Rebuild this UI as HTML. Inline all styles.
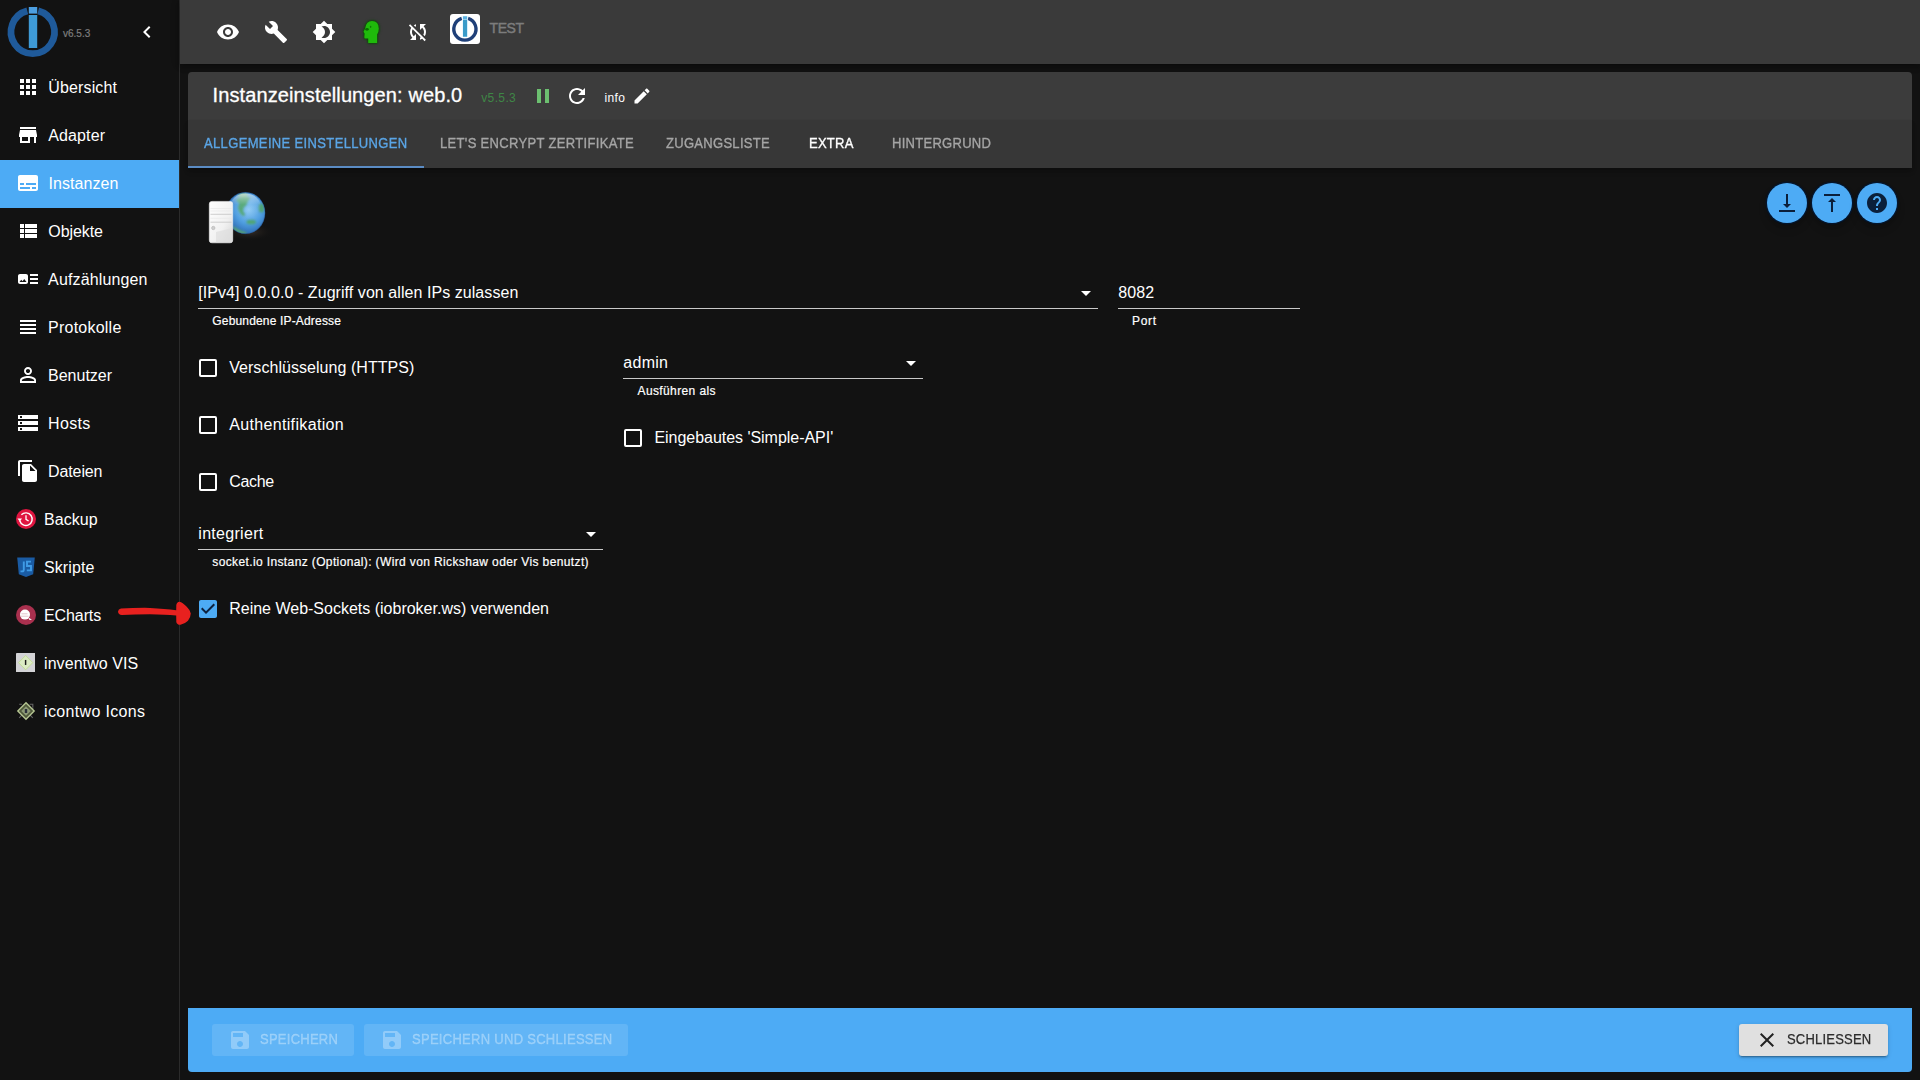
<!DOCTYPE html>
<html><head><meta charset="utf-8">
<style>
*{box-sizing:border-box;margin:0;padding:0}
html,body{width:1920px;height:1080px;overflow:hidden;background:#121212;font-family:"Liberation Sans",sans-serif;color:#fff}
.abs{position:absolute}
svg{display:block}
#side{position:absolute;left:0;top:0;width:180px;height:1080px;background:#121212;border-right:1px solid #2b2b2b}
.it{position:absolute;left:0;width:179px;height:48px;}
.it svg.mi{position:absolute;left:16px;top:11px;width:24px;height:24px;fill:#fff}
.it .ci{position:absolute;left:16px;top:13px;width:20px;height:20px}
.it span{position:absolute;top:0;line-height:47px;font-size:16px;white-space:nowrap;color:#fff}
.it .t1{left:48px}
.it .t2{left:44px}
#top{position:absolute;left:180px;top:0;width:1740px;height:64px;background:#3a3a3a;box-shadow:0 2px 4px -1px rgba(0,0,0,.2),0 4px 5px 0 rgba(0,0,0,.14),0 1px 10px 0 rgba(0,0,0,.12)}
#top svg.ti{position:absolute;width:24px;height:24px;fill:#fff;top:20px}
#title{position:absolute;left:188px;top:72px;width:1724px;height:48px;background:#3c3c3c;border-radius:4px 4px 0 0}
#tabs{position:absolute;left:188px;top:120px;width:1724px;height:48px;background:#373737;box-shadow:0 2px 4px -1px rgba(0,0,0,.2),0 4px 5px 0 rgba(0,0,0,.14)}
.tab{position:absolute;top:0;transform:scaleX(.93);transform-origin:0 0;line-height:47px;font-size:14px;white-space:nowrap;color:#a5a5a5;-webkit-text-stroke:.35px currentColor}
.txt{position:absolute;white-space:nowrap;color:#fff}
.f16{font-size:16px;line-height:20px}
.f12{font-size:12px;line-height:14px;-webkit-text-stroke:.2px #fff}
.ul{position:absolute;height:1px;background:#c9c9c9}
.cb{position:absolute;width:18px;height:18px;border:2px solid #fff;border-radius:2px}
.arr{position:absolute;width:0;height:0;border-left:5px solid transparent;border-right:5px solid transparent;border-top:5px solid #fff}
.fab{position:absolute;width:40px;height:40px;border-radius:50%;background:#4dabf5;top:183px;box-shadow:0 0 0 1.500px rgba(4,22,48,.85),0 3px 5px -1px rgba(0,0,0,.2),0 6px 10px 0 rgba(0,0,0,.14)}
.fab svg{position:absolute;left:8px;top:8px;width:24px;height:24px;fill:#0b1f3a}
#bot{position:absolute;left:188px;top:1008px;width:1724px;height:64px;background:#4dabf5;border-radius:0 0 4px 4px}
.btn{position:absolute;top:16px;height:32px;border-radius:3px;font-size:14px;white-space:nowrap}
.btn.dis{background:rgba(255,255,255,.12);color:rgba(255,255,255,.3)}
.btn span{position:absolute;top:0;line-height:31px;transform:scaleX(.93);transform-origin:0 0}
.btn.dis span{-webkit-text-stroke:.35px currentColor}
/*LS*/
#n0{letter-spacing:0.140px;margin-left:0.3px}
#n1{letter-spacing:0.109px;margin-left:0.3px}
#n2{letter-spacing:0.089px;margin-left:0.4px}
#n3{letter-spacing:-0.073px;margin-left:0.3px}
#n4{letter-spacing:0.140px;margin-left:0.1px}
#n5{letter-spacing:0.227px;margin-left:0.1px}
#n6{letter-spacing:-0.021px;margin-left:0.1px}
#n7{letter-spacing:0.323px;margin-left:0.1px}
#n8{letter-spacing:-0.126px;margin-left:0.1px}
#n9{letter-spacing:0.065px;margin-left:0.0px}
#n10{letter-spacing:0.101px;margin-left:0.0px}
#n11{letter-spacing:-0.099px;margin-left:0.0px}
#n12{letter-spacing:0.074px;margin-left:0.0px}
#n13{letter-spacing:0.347px;margin-left:0.0px}
#s1{letter-spacing:0.061px;margin-left:0.3px}
#h1{letter-spacing:0.167px;margin-left:0.3px}
#c1{letter-spacing:0.047px;margin-left:0.2px}
#s3{letter-spacing:0.280px;margin-left:0.3px}
#h3{letter-spacing:0.384px;margin-left:0.5px}
#c3{letter-spacing:-0.032px;margin-left:0.4px}
#s2{letter-spacing:0.135px;margin-left:0.2px}
#h2{letter-spacing:0.661px;margin-left:0.0px}
#c2{letter-spacing:0.340px;margin-left:0.2px}
#c4{letter-spacing:-0.312px;margin-left:0.2px}
#s4{letter-spacing:0.294px;margin-left:0.3px}
#h4{letter-spacing:0.375px;margin-left:0.3px}
#c5{letter-spacing:-0.001px;margin-left:0.2px}
#ttl{letter-spacing:0.110px;margin-left:0.5px}
#ver{letter-spacing:0.379px;margin-left:-0.8px}
#info{letter-spacing:0.414px;margin-left:0.4px}
#tb1{letter-spacing:0.367px;margin-left:-0.2px}
#tb2{letter-spacing:0.344px;margin-left:0.0px}
#tb3{letter-spacing:0.306px;margin-left:0.2px}
#tb4{letter-spacing:0.264px;margin-left:0.2px}
#tb5{letter-spacing:0.289px;margin-left:0.3px}
#b1{letter-spacing:0.259px;margin-left:-0.4px}
#b2{letter-spacing:0.294px;margin-left:0.0px}
#b3{letter-spacing:0.204px;margin-left:-0.1px}
#v6{letter-spacing:-0.020px;margin-left:0.1px}
#test{letter-spacing:-0.460px;margin-left:0.0px}
/*ENDLS*/
</style></head><body>

<div id="side">
 <!-- logo -->
 <svg class="abs" style="left:0;top:0" width="64" height="64" viewBox="0 0 64 64">
  <path d="M27.3 10.9 A21.75 21.75 0 1 0 38.2 10.9" fill="none" stroke="#1f5a9a" stroke-width="6.8"/>
  <rect x="28.8" y="7" width="8.4" height="6.6" fill="#4c9fe2"/>
  <rect x="28.8" y="15" width="8.4" height="33" fill="#3e9ad6"/>
 </svg>
 <div class="txt" id="v6" style="left:63px;top:27.500px;font-size:10px;line-height:12px;color:#7e7e7e;-webkit-text-stroke:.2px #7e7e7e">v6.5.3</div>
 <svg class="abs" style="left:135px;top:20px;fill:#fff" width="24" height="24" viewBox="0 0 24 24"><path d="M15.41 7.41L14 6l-6 6 6 6 1.41-1.41L10.83 12z"/></svg>

 <div class="it" style="top:64px"><svg class="mi" viewBox="0 0 24 24"><path d="M4 8h4V4H4v4zm6 12h4v-4h-4v4zm-6 0h4v-4H4v4zm0-6h4v-4H4v4zm6 0h4v-4h-4v4zm6-10v4h4V4h-4zm-6 4h4V4h-4v4zm6 6h4v-4h-4v4zm0 6h4v-4h-4v4z"/></svg><span class="t1" id="n0">Übersicht</span></div>
 <div class="it" style="top:112px"><svg class="mi" viewBox="0 0 24 24"><path d="M20 4H4v2h16V4zm1 10v-2l-1-5H4l-1 5v2h1v6h10v-6h4v6h2v-6h1zm-9 4H6v-4h6v4z"/></svg><span class="t1" id="n1">Adapter</span></div>
 <div class="it" style="top:160px;background:#4dabf5"><svg class="mi" viewBox="0 0 24 24"><path d="M20 4H4c-1.1 0-2 .9-2 2v12c0 1.1.9 2 2 2h16c1.1 0 2-.9 2-2V6c0-1.1-.9-2-2-2zM4 12h4v2H4v-2zm10 6H4v-2h10v2zm6 0h-4v-2h4v2zm0-4H10v-2h10v2z"/></svg><span class="t1" id="n2">Instanzen</span></div>
 <div class="it" style="top:208px"><svg class="mi" viewBox="0 0 24 24"><path d="M4 14h4v-4H4v4zm0 5h4v-4H4v4zM4 9h4V5H4v4zm5 5h12v-4H9v4zm0 5h12v-4H9v4zM9 5v4h12V5H9z"/></svg><span class="t1" id="n3">Objekte</span></div>
 <div class="it" style="top:256px"><svg class="mi" viewBox="0 0 24 24"><path d="M22 13h-8v-2h8v2zm0-6h-8v2h8V7zm-8 10h8v-2h-8v2zm-2-8v6c0 1.1-.9 2-2 2H4c-1.1 0-2-.9-2-2V9c0-1.1.9-2 2-2h6c1.1 0 2 .9 2 2zm-1.500 6l-2.250-3-1.750 2.260-1.250-1.510L3.500 15h7z"/></svg><span class="t1" id="n4">Aufzählungen</span></div>
 <div class="it" style="top:304px"><svg class="mi" viewBox="0 0 24 24"><path d="M4 15h16v-2H4v2zm0 4h16v-2H4v2zm0-8h16V9H4v2zm0-6v2h16V5H4z"/></svg><span class="t1" id="n5">Protokolle</span></div>
 <div class="it" style="top:352px"><svg class="mi" viewBox="0 0 24 24"><path d="M12 5.900c1.160 0 2.100.940 2.100 2.100s-.940 2.100-2.100 2.100S9.900 9.160 9.900 8s.940-2.100 2.100-2.100m0 9c2.970 0 6.100 1.460 6.100 2.100v1.100H5.900V17c0-.640 3.130-2.100 6.100-2.100M12 4C9.790 4 8 5.790 8 8s1.790 4 4 4 4-1.790 4-4-1.790-4-4-4zm0 9c-2.670 0-8 1.340-8 4v3h16v-3c0-2.660-5.330-4-8-4z"/></svg><span class="t1" id="n6">Benutzer</span></div>
 <div class="it" style="top:400px"><svg class="mi" viewBox="0 0 24 24"><path d="M2 20h20v-4H2v4zm2-3h2v2H4v-2zM2 4v4h20V4H2zm4 3H4V5h2v2zm-4 7h20v-4H2v4zm2-3h2v2H4v-2z"/></svg><span class="t1" id="n7">Hosts</span></div>
 <div class="it" style="top:448px"><svg class="mi" viewBox="0 0 24 24"><path d="M16 1H4c-1.100 0-2 .900-2 2v14h2V3h12V1zm-1 4l6 6v10c0 1.100-.900 2-2 2H7.990C6.890 23 6 22.100 6 21l.010-14c0-1.100.890-2 1.990-2h7zm-1 7h5.500L14 6.500V12z"/></svg><span class="t1" id="n8">Dateien</span></div>
 <div class="it" style="top:496px"><div class="ci" id="ic-backup"><svg viewBox="0 0 20 20" width="20" height="20"><circle cx="10" cy="10" r="10" fill="#df1540"/><path d="M3.800 11.800A6.300 6.300 0 1 0 5.400 5.700" stroke="#fff" fill="none" stroke-width="1.400"/><path d="M1.500 9.600h4.600l-2.300 3z" fill="#fff"/><path d="M10 6.300v4l2.600 1.700" stroke="#fff" fill="none" stroke-width="1.300"/></svg></div><span class="t2" id="n9">Backup</span></div>
 <div class="it" style="top:544px"><div class="ci" id="ic-js"><svg viewBox="0 0 20 20" width="20" height="20"><path d="M1.200 .6h17.600l-1.600 16.600L10 20l-7.200-2.800z" fill="#1a5ba3"/><path d="M7.800 4.600v8.200q0 1.600-1.700 1.600h-1.600M15 4.600h-4v4.400h4v4.400h-4.200" fill="none" stroke="#3f9be6" stroke-width="1.900"/></svg></div><span class="t2" id="n10">Skripte</span></div>
 <div class="it" style="top:592px"><div class="ci" id="ic-echarts"><svg viewBox="0 0 20 20" width="20" height="20"><circle cx="10" cy="10" r="10" fill="#a9304e"/><circle cx="9" cy="9.600" r="5" fill="#fff"/><path d="M5 11.200h7.500M5.500 8.800h6" stroke="#d9b6bf" stroke-width=".8"/><path d="M12.500 12.500l3.500 2.300-2.600.3z" fill="#fff"/></svg></div><span class="t2" id="n11">ECharts</span></div>
 <div class="it" style="top:640px"><div class="ci" id="ic-inv"><svg viewBox="0 0 20 20" width="19.300" height="19.300"><rect width="20" height="20" rx=".8" fill="#d3d3d6"/><path d="M10 2.600l7.400 7.400-7.400 7.400L2.600 10z" fill="#dcebc4" stroke="#bfdc8e" stroke-width=".9"/><rect x="9.200" y="7.200" width="1.500" height="5.200" fill="#1c1c1c"/></svg></div><span class="t2" id="n12">inventwo VIS</span></div>
 <div class="it" style="top:688px"><div class="ci" id="ic-icon2"><svg viewBox="-1 -1 22 22" width="20" height="20" style="opacity:.9"><path d="M2.500 2.500h3M14 2.500h3.500v3M2.500 17.500l3-3M14.500 14.500l3 3M17.500 6v2" stroke="#6d6d6d" stroke-width="1.200" fill="none"/><path d="M10 1l9 9-9 9-9-9z" fill="#55603f" stroke="#c9dba2" stroke-width="1.500"/><path d="M10 4.800l5.200 5.200-5.200 5.200L4.800 10z" fill="#9aa981"/><rect x="8.700" y="7.800" width="2.600" height="4.400" fill="#2e3440"/></svg></div><span class="t2" id="n13">icontwo Icons</span></div>
</div>

<div id="top">
 <svg class="ti" style="left:36px" viewBox="0 0 24 24"><path d="M12 4.500C7 4.500 2.730 7.610 1 12c1.730 4.390 6 7.500 11 7.500s9.270-3.110 11-7.500c-1.730-4.390-6-7.500-11-7.500zM12 17c-2.760 0-5-2.240-5-5s2.240-5 5-5 5 2.240 5 5-2.240 5-5 5zm0-8c-1.660 0-3 1.340-3 3s1.340 3 3 3 3-1.340 3-3-1.340-3-3-3z"/></svg>
 <svg class="ti" style="left:84px" viewBox="0 0 24 24"><path d="M22.700 19l-9.100-9.100c.900-2.300.400-5-1.500-6.900-2-2-5-2.400-7.400-1.300L9 6 6 9 1.600 4.700C.400 7.100.900 10.100 2.900 12.100c1.900 1.900 4.600 2.400 6.900 1.500l9.100 9.100c.400.400 1 .400 1.400 0l2.300-2.300c.500-.400.500-1.100.100-1.400z"/></svg>
 <svg class="ti" style="left:132px" viewBox="0 0 24 24"><path d="M20 8.690V4h-4.690L12 .690 8.690 4H4v4.690L.690 12 4 15.310V20h4.690L12 23.310 15.310 20H20v-4.690L23.310 12 20 8.690zM12 18c-.890 0-1.740-.200-2.500-.550C11.560 16.500 13 14.420 13 12s-1.440-4.500-3.500-5.450C10.260 6.200 11.110 6 12 6c3.310 0 6 2.690 6 6s-2.690 6-6 6z"/></svg>
 <svg class="ti" style="left:226px" viewBox="0 0 24 24"><path d="M10 6.350V4.260c-.800.210-1.550.540-2.230.960l1.460 1.460c.250-.120.500-.240.770-.330zm-7.140-.940l2.360 2.360C4.450 8.990 4 10.440 4 12c0 2.210.910 4.200 2.360 5.640L4 20h6v-6l-2.240 2.240C6.680 15.150 6 13.660 6 12c0-1 .250-1.940.680-2.770l8.080 8.080c-.250.130-.500.250-.770.340v2.090c.800-.210 1.550-.540 2.230-.960l2.360 2.360 1.270-1.270L4.140 4.140 2.860 5.410zM20 4h-6v6l2.240-2.240C17.320 8.850 18 10.340 18 12c0 1-.250 1.940-.680 2.770l1.460 1.460C19.550 15.010 20 13.560 20 12c0-2.210-.910-4.200-2.360-5.640L20 4z"/></svg>
 <svg class="abs" style="left:172px;top:12px;filter:drop-shadow(0 0 1.300px #0a4a04) drop-shadow(0 0 .8px #0a4a04)" width="40" height="40" viewBox="352 12 40 40"><path fill="#1fba0b" d="M368.200 43V38.600H365.300Q364.200 38.500 364.300 37.200L364.600 33.400 363.500 31.800 365.200 28.200Q366.200 21 372 21 378.800 21 378.800 28.600 378.800 32.200 377.100 34.600V43Z"/><ellipse cx="367" cy="29.300" rx="1.800" ry="1.400" fill="#0a6a03"/><ellipse cx="370.600" cy="26.800" rx=".800" ry="1.100" fill="#0f7a06"/></svg>
 <svg class="abs" style="left:270px;top:14px" width="30" height="30" viewBox="450 14 30 30"><rect x="450" y="14" width="30" height="30" rx="3" fill="#fff"/><path d="M461.700 18.400A11.100 11.100 0 1 0 468.100 18.400" fill="none" stroke="#1f4079" stroke-width="3.350"/><rect x="462.600" y="16" width="4.900" height="21" fill="#d4f1ff"/><rect x="463" y="16.300" width="4.100" height="2.700" fill="#5cb2e2"/><rect x="463" y="19.600" width="4.100" height="17.100" fill="#3a9bc9"/></svg>
 <div class="txt" id="test" style="left:309.600px;top:20px;font-size:14px;line-height:16px;color:#7c7c7c;-webkit-text-stroke:.45px #7c7c7c">TEST</div>
</div>

<div id="title">
 <div class="txt" id="ttl" style="left:24px;top:11px;font-size:20px;line-height:24px;-webkit-text-stroke:.3px #fff">Instanzeinstellungen: web.0</div>
 <div class="txt" id="ver" style="left:294px;top:19px;font-size:12px;line-height:14px;color:#3f8646">v5.5.3</div>
 <svg class="abs" style="left:343px;top:12px;fill:#6cc070" width="24" height="24" viewBox="0 0 24 24"><path d="M6 19h4V5H6v14zm8-14v14h4V5h-4z"/></svg>
 <svg class="abs" style="left:377px;top:12px;fill:#fff" width="24" height="24" viewBox="0 0 24 24"><path d="M17.650 6.350C16.200 4.900 14.210 4 12 4c-4.420 0-7.990 3.580-7.990 8s3.570 8 7.990 8c3.730 0 6.840-2.550 7.730-6h-2.080c-.820 2.330-3.040 4-5.650 4-3.310 0-6-2.690-6-6s2.690-6 6-6c1.660 0 3.140.690 4.220 1.780L13 11h7V4l-2.350 2.350z"/></svg>
 <div class="txt" id="info" style="left:416px;top:19px;font-size:12px;line-height:14px">info</div>
 <svg class="abs" style="left:444px;top:14px;fill:#fff" width="20" height="20" viewBox="0 0 24 24"><path d="M3 17.250V21h3.750L17.810 9.940l-3.750-3.750L3 17.250zM20.710 7.040c.390-.390.390-1.020 0-1.410l-2.340-2.340c-.390-.390-1.020-.390-1.410 0l-1.830 1.830 3.750 3.750 1.830-1.830z"/></svg>
</div>
<div id="tabs">
 <div class="tab" id="tb1" style="left:16px;color:#5aa5e6">ALLGEMEINE EINSTELLUNGEN</div>
 <div class="tab" id="tb2" style="left:252px">LET'S ENCRYPT ZERTIFIKATE</div>
 <div class="tab" id="tb3" style="left:478px">ZUGANGSLISTE</div>
 <div class="tab" id="tb4" style="left:621px;color:#fff">EXTRA</div>
 <div class="tab" id="tb5" style="left:704px">HINTERGRUND</div>
 <div class="abs" style="left:0;top:46px;width:236px;height:2px;background:#5b8cc4"></div>
</div>
<div id="content">
 <svg id="webicon" class="abs" style="left:195px;top:180px" width="90" height="75" viewBox="195 180 90 75">
  <defs>
   <radialGradient id="gl" cx="0.58" cy="0.42" r="0.62"><stop offset="0" stop-color="#8fcaf5"/><stop offset=".55" stop-color="#4f9ee0"/><stop offset="1" stop-color="#2a65ae"/></radialGradient>
   <radialGradient id="sh" cx=".5" cy=".5" r=".5"><stop offset="0" stop-color="#3a302a" stop-opacity=".9"/><stop offset="1" stop-color="#121212" stop-opacity="0"/></radialGradient>
   <linearGradient id="sv" x1="0" y1="0" x2="1" y2="1"><stop offset="0" stop-color="#ffffff"/><stop offset=".6" stop-color="#f1f1f1"/><stop offset="1" stop-color="#d4d4d4"/></linearGradient>
   <clipPath id="gc"><ellipse cx="245.500" cy="213" rx="19.400" ry="20.600"/></clipPath>
   <linearGradient id="hl" x1="0" y1="0" x2="0" y2="1"><stop offset="0" stop-color="#fff" stop-opacity=".55"/><stop offset=".45" stop-color="#fff" stop-opacity=".05"/><stop offset="1" stop-color="#fff" stop-opacity="0"/></linearGradient>
   <filter id="bl"><feGaussianBlur stdDeviation=".9"/></filter>
  </defs>
  <ellipse cx="250" cy="232" rx="24" ry="9" fill="url(#sh)"/>
  <ellipse cx="245.500" cy="213" rx="19.600" ry="20.800" fill="url(#gl)"/>
  <g clip-path="url(#gc)" fill="#4fa566" opacity=".88" filter="url(#bl)">
   <path d="M236 200.100L239.400 197.400 245 196.200 251 197.500 248 200.800 246.400 205 243.600 207.800 243 211.200 245.200 214.500 243.600 216.300 240.800 214 238.700 210.600 238 207.100 239.400 203.600Z"/>
   <ellipse cx="251.200" cy="222" rx="4.800" ry="2.300"/>
   <path d="M233 226Q240 231 247 232.500L244 236 234 233Z" fill="#5aa870"/>
   <ellipse cx="261.500" cy="208" rx="2.800" ry="4.500"/>
   <ellipse cx="243" cy="195" rx="5" ry="2" fill="#6fb37c"/>
  </g>
  <ellipse cx="245.500" cy="206" rx="15" ry="12.500" fill="url(#hl)"/>
  <ellipse cx="245.500" cy="213" rx="19.400" ry="20.600" fill="none" stroke="#1d4f93" stroke-opacity=".3" stroke-width="1.200"/>
  <rect x="209.300" y="201.400" width="23.400" height="41.400" rx="2.600" fill="url(#sv)" stroke="#f4f4f4" stroke-width=".6"/>
  <path d="M210.500 214.300H231.500M210.500 222.200H231.500" stroke="#c9c9c9" stroke-width=".9"/>
  <path d="M210.500 208.500H231.500M210.500 211H231.500M210.500 218.300H231.500" stroke="#e6e6e6" stroke-width=".6"/>
  <circle cx="213.300" cy="228" r="1.700" fill="#cfcfcf" stroke="#b4b4b4" stroke-width=".6"/>
  <path d="M216 232L232.400 228V240.500Q232.400 242.400 230.500 242.400H216Z" fill="#dedede" opacity=".7"/>
 </svg>
 <div class="fab" style="left:1767px"><svg viewBox="0 0 24 24"><path d="M16 13h-3V3h-2v10H8l4 4 4-4zM4 19v2h16v-2H4z"/></svg></div>
 <div class="fab" style="left:1812px"><svg viewBox="0 0 24 24"><path d="M8 11h3v10h2V11h3l-4-4-4 4zM4 3v2h16V3H4z"/></svg></div>
 <div class="fab" style="left:1857px"><svg viewBox="0 0 24 24"><path d="M12 2C6.480 2 2 6.480 2 12s4.480 10 10 10 10-4.480 10-10S17.520 2 12 2zm1 17h-2v-2h2v2zm2.070-7.750l-.9.920C13.450 12.900 13 13.500 13 15h-2v-.500c0-1.100.450-2.100 1.170-2.830l1.240-1.260c.370-.360.590-.860.590-1.410 0-1.100-.9-2-2-2s-2 .9-2 2H8c0-2.210 1.790-4 4-4s4 1.790 4 4c0 .880-.360 1.680-.930 2.250z"/></svg></div>

 <div class="txt f16" id="s1" style="left:198px;top:283px">[IPv4] 0.0.0.0 - Zugriff von allen IPs zulassen</div>
 <div class="arr" style="left:1081px;top:291px"></div>
 <div class="ul" style="left:198px;top:308px;width:900px"></div>
 <div class="txt f12" id="h1" style="left:212px;top:314px">Gebundene IP-Adresse</div>

 <div class="txt f16" id="s2" style="left:1118px;top:283px">8082</div>
 <div class="ul" style="left:1118px;top:308px;width:182px"></div>
 <div class="txt f12" id="h2" style="left:1132px;top:314px">Port</div>

 <div class="cb" style="left:199px;top:359px"></div>
 <div class="txt f16" id="c1" style="left:229px;top:358px">Verschlüsselung (HTTPS)</div>

 <div class="txt f16" id="s3" style="left:623px;top:353px">admin</div>
 <div class="arr" style="left:906px;top:361px"></div>
 <div class="ul" style="left:623px;top:378px;width:300px"></div>
 <div class="txt f12" id="h3" style="left:637px;top:384px">Ausführen als</div>

 <div class="cb" style="left:199px;top:416px"></div>
 <div class="txt f16" id="c2" style="left:229px;top:415px">Authentifikation</div>

 <div class="cb" style="left:624px;top:429px"></div>
 <div class="txt f16" id="c3" style="left:654px;top:428px">Eingebautes 'Simple-API'</div>

 <div class="cb" style="left:199px;top:473px"></div>
 <div class="txt f16" id="c4" style="left:229px;top:472px">Cache</div>

 <div class="txt f16" id="s4" style="left:198px;top:524px">integriert</div>
 <div class="arr" style="left:586px;top:532px"></div>
 <div class="ul" style="left:198px;top:549px;width:405px"></div>
 <div class="txt f12" id="h4" style="left:212px;top:555px">socket.io Instanz (Optional): (Wird von Rickshaw oder Vis benutzt)</div>

 <svg class="abs" style="left:196px;top:597px" width="24" height="24" viewBox="0 0 24 24"><path fill="#4dabf5" d="M19 3H5c-1.110 0-2 .900-2 2v14c0 1.100.890 2 2 2h14c1.110 0 2-.900 2-2V5c0-1.100-.890-2-2-2z"/><path fill="#0d2240" d="M10 17l-5-5 1.410-1.410L10 14.170l7.590-7.590L19 8l-9 9z"/></svg>
 <div class="txt f16" id="c5" style="left:229px;top:599px">Reine Web-Sockets (iobroker.ws) verwenden</div>

 <svg class="abs" style="left:110px;top:596px" width="90" height="32" viewBox="110 596 90 32"><path fill="#e8211f" d="M118 611.600 Q118.300 609 121 608.600 Q135 607.700 150 607.900 Q165 608.600 176.200 610.200 L176.300 605 Q176.800 602 179.500 601.800 Q182.500 602.500 186.500 606.500 Q190.200 610 190.800 613.500 Q190.600 617.500 188 620.800 Q184.500 624.200 180.500 624.800 Q177 625 176.300 622 L176.200 615.400 Q165 614.800 150 614.300 Q135 614.300 122 615 Q118.200 615 118 611.600Z"/></svg>
</div>
<div id="bot">
 <div class="btn dis" style="left:24px;width:142px"><svg class="abs" style="left:16px;top:4px;fill:rgba(255,255,255,.3)" width="24" height="24" viewBox="0 0 24 24"><path d="M17 3H5c-1.110 0-2 .900-2 2v14c0 1.100.890 2 2 2h14c1.100 0 2-.900 2-2V7l-4-4zm-5 16c-1.660 0-3-1.340-3-3s1.340-3 3-3 3 1.340 3 3-1.340 3-3 3zm3-10H5V5h10v4z"/></svg><span id="b1" style="left:48px">SPEICHERN</span></div>
 <div class="btn dis" style="left:176px;width:264px"><svg class="abs" style="left:16px;top:4px;fill:rgba(255,255,255,.3)" width="24" height="24" viewBox="0 0 24 24"><path d="M17 3H5c-1.110 0-2 .900-2 2v14c0 1.100.890 2 2 2h14c1.100 0 2-.900 2-2V7l-4-4zm-5 16c-1.660 0-3-1.340-3-3s1.340-3 3-3 3 1.340 3 3-1.340 3-3 3zm3-10H5V5h10v4z"/></svg><span id="b2" style="left:48px">SPEICHERN UND SCHLIESSEN</span></div>
 <div class="btn" style="left:1551px;width:149px;background:#e0e0e0;color:#2b2b2b;-webkit-text-stroke:.25px #2b2b2b;box-shadow:0 3px 1px -2px rgba(0,0,0,.2),0 2px 2px 0 rgba(0,0,0,.14),0 1px 5px 0 rgba(0,0,0,.12)"><svg class="abs" style="left:16px;top:4px;fill:#222" width="24" height="24" viewBox="0 0 24 24"><path d="M19 6.410L17.590 5 12 10.590 6.410 5 5 6.410 10.590 12 5 17.590 6.410 19 12 13.410 17.590 19 19 17.590 13.410 12z"/></svg><span id="b3" style="left:48px">SCHLIESSEN</span></div>
</div>
</body></html>
